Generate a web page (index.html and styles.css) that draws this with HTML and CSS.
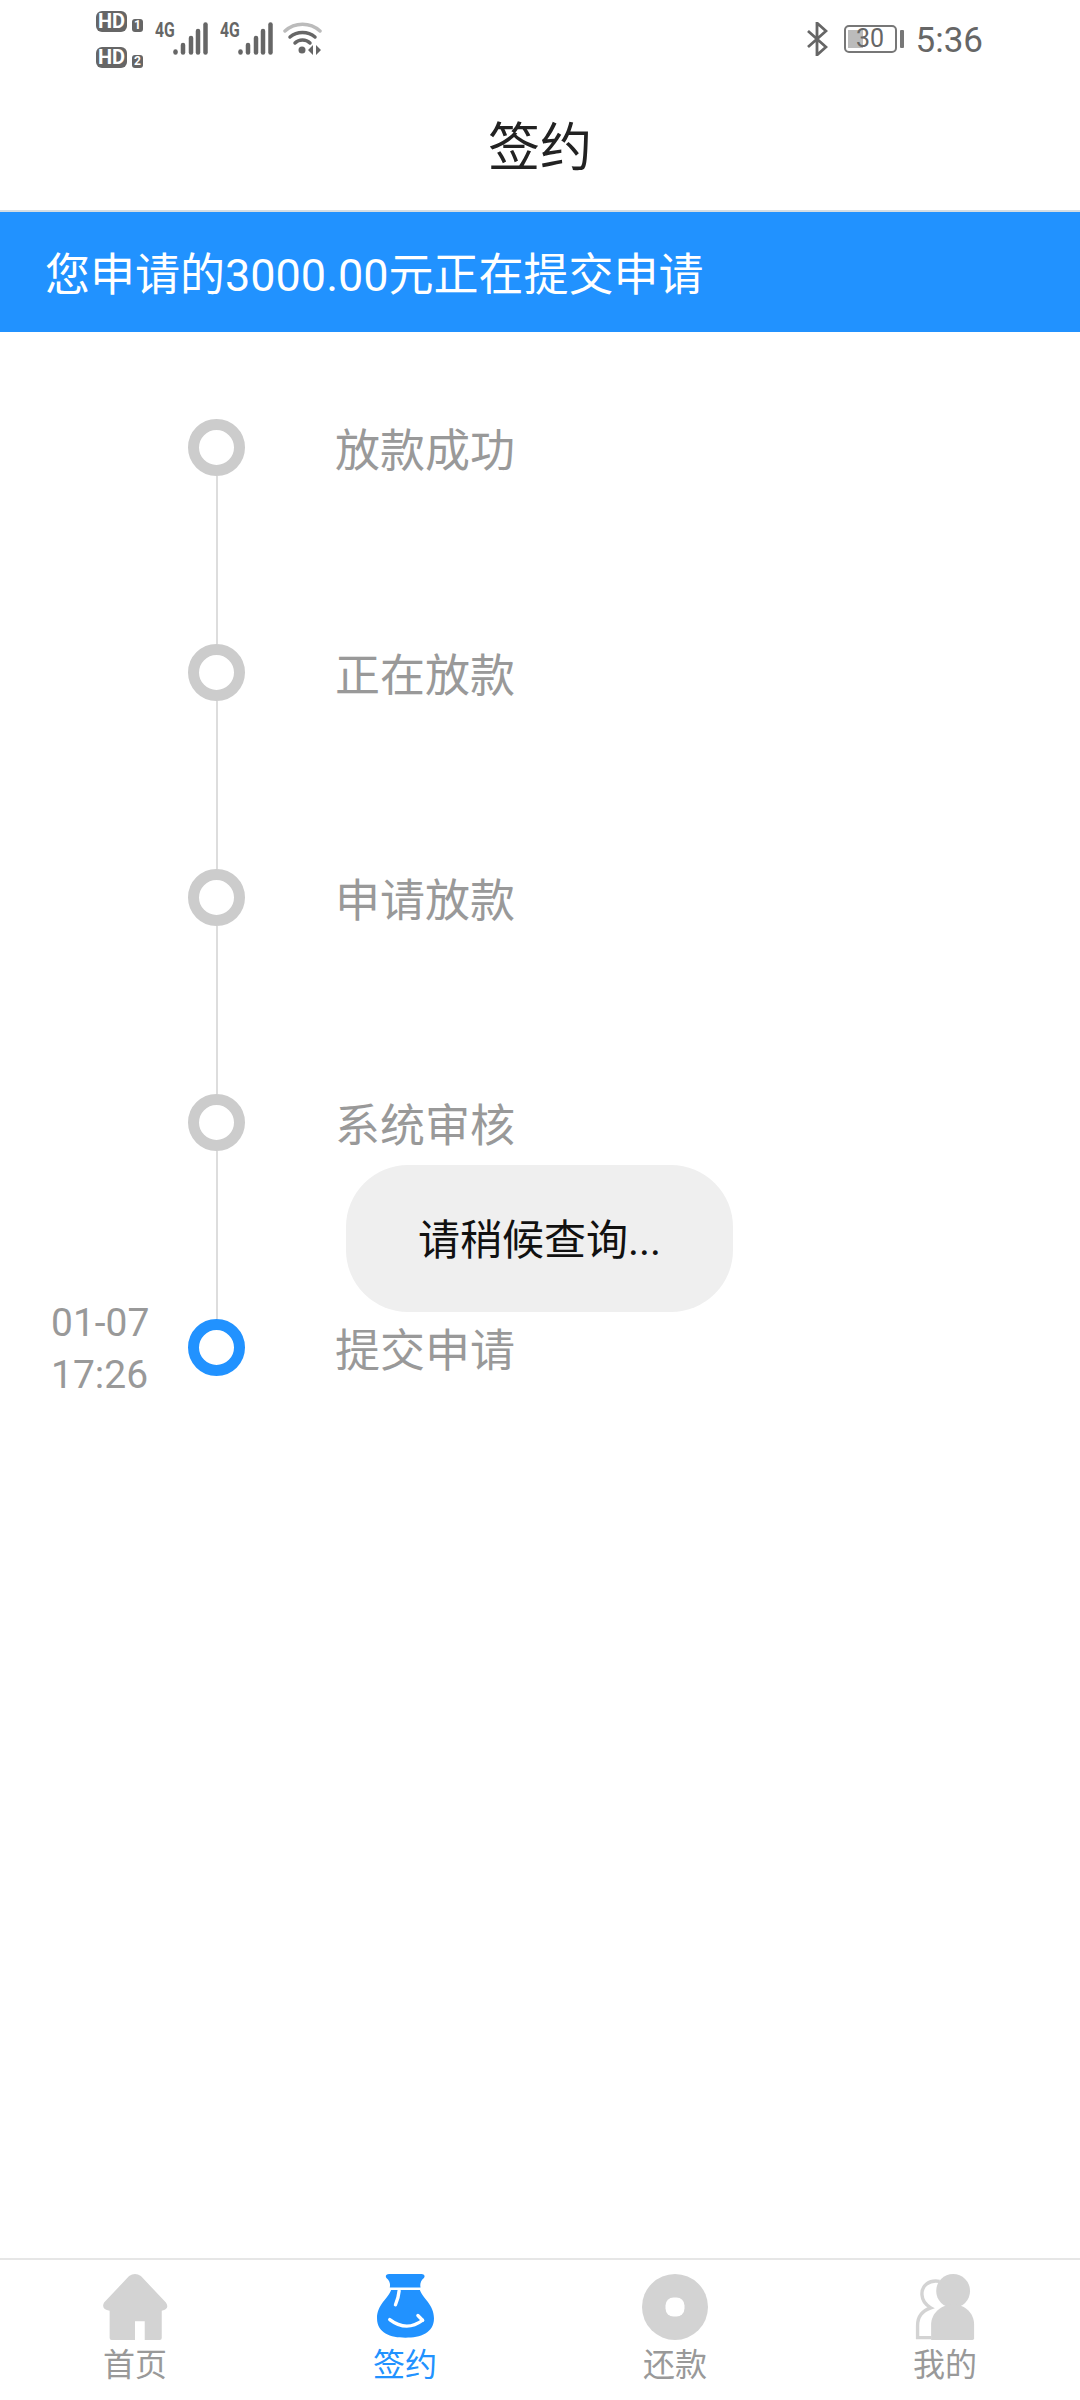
FILE: index.html
```html
<!DOCTYPE html>
<html lang="zh-CN">
<head>
    <meta charset="UTF-8">
    <meta name="viewport" content="width=device-width, initial-scale=1.0">
    <title>签约</title>
    <link rel="stylesheet" href="styles.css">
</head>
<body>
    <div class="status-bar">
        <div class="hd-col">
            <div class="hd-row"><span class="hd">HD</span><span class="sim">1</span></div>
            <div class="hd-row"><span class="hd">HD</span><span class="sim">2</span></div>
        </div>
        <div class="signal">
            <span class="net">4G</span>
            <svg class="bars" width="35" height="33" viewBox="0 0 35 33">
                <g stroke="#666" stroke-width="4.5" stroke-linecap="round">
                    <line x1="2.5" y1="30.5" x2="2.5" y2="29.5"/>
                    <line x1="10" y1="30.5" x2="10" y2="23"/>
                    <line x1="18" y1="30.5" x2="18" y2="16"/>
                    <line x1="25" y1="30.5" x2="25" y2="9"/>
                    <line x1="32.5" y1="30.5" x2="32.5" y2="2.5"/>
                </g>
            </svg>
        </div>
        <div class="signal">
            <span class="net">4G</span>
            <svg class="bars" width="35" height="33" viewBox="0 0 35 33">
                <g stroke="#666" stroke-width="4.5" stroke-linecap="round">
                    <line x1="2.5" y1="30.5" x2="2.5" y2="29.5"/>
                    <line x1="10" y1="30.5" x2="10" y2="23"/>
                    <line x1="18" y1="30.5" x2="18" y2="16"/>
                    <line x1="25" y1="30.5" x2="25" y2="9"/>
                    <line x1="32.5" y1="30.5" x2="32.5" y2="2.5"/>
                </g>
            </svg>
        </div>
        <svg class="wifi" width="40" height="33" viewBox="0 0 40 33">
            <g fill="none" stroke-linecap="round" stroke-width="3.5">
                <path d="M2 9 C12 0 27 0 37 9" stroke="#bbb"/>
                <path d="M7 15 C14 9 25 9 32 15" stroke="#666"/>
                <path d="M12 21 C16 17 23 17 27 21" stroke="#666"/>
            </g>
            <circle cx="19" cy="28" r="3.5" fill="#666"/>
            <path d="M25 28 L30 23 V33 Z M33 23 L38 28 L33 33 Z" fill="#666"/>
        </svg>
        <div class="status-right">
            <svg class="bt" width="21" height="34" viewBox="0 0 21 34">
                <path d="M1 9 L19 25 L10 33 V1 L19 9 L1 25" fill="none" stroke="#666" stroke-width="2.8"/>
            </svg>
            <div class="battery">
                <div class="battery-fill"></div>
                <span class="battery-num">30</span>
            </div>
            <div class="battery-nub"></div>
            <span class="clock">5:36</span>
        </div>
    </div>

    <h1 class="title">签约</h1>
    <div class="banner">您申请的3000.00元正在提交申请</div>

    <div class="timeline">
        <div class="step">
            <div class="step-time"></div>
            <div class="step-mark"><span class="dot"></span><span class="line"></span></div>
            <div class="step-name">放款成功</div>
        </div>
        <div class="step">
            <div class="step-time"></div>
            <div class="step-mark"><span class="dot"></span><span class="line"></span></div>
            <div class="step-name">正在放款</div>
        </div>
        <div class="step">
            <div class="step-time"></div>
            <div class="step-mark"><span class="dot"></span><span class="line"></span></div>
            <div class="step-name">申请放款</div>
        </div>
        <div class="step">
            <div class="step-time"></div>
            <div class="step-mark"><span class="dot"></span><span class="line"></span></div>
            <div class="step-name">系统审核</div>
        </div>
        <div class="step">
            <div class="step-time">01-07<br>17:26</div>
            <div class="step-mark"><span class="dot dot-active"></span></div>
            <div class="step-name">提交申请</div>
        </div>
    </div>

    <div class="toast">请稍候查询...</div>

    <nav class="tabbar">
        <div class="tab">
            <svg width="66" height="66" viewBox="0 0 190 190">
                <path d="M78 6 Q95 -6 112 6 L184 82 Q196 100 172 106 V184 Q172 190 166 190 H28 Q22 190 22 184 V106 Q-4 100 6 82 Z" fill="#d3d3d3"/>
                <rect x="95" y="136" width="28" height="54" fill="#fff"/>
            </svg>
            <span>首页</span>
        </div>
        <div class="tab tab-active">
            <svg width="57" height="66" viewBox="0 0 170 197">
                <path d="M36 0 Q82 -6 134 0 Q146 2 140 12 Q126 24 130 40 H38 Q42 24 28 12 Q22 2 36 0 Z" fill="#2192ff"/>
                <path d="M42 48 H128 C136 72 170 92 170 132 C170 176 130 190 85 190 C40 190 0 176 0 132 C0 92 34 72 42 48 Z" fill="#2192ff"/>
                <g fill="none" stroke="#fff" stroke-width="10" stroke-linecap="round">
                    <path d="M66 50 Q64 72 55 92"/>
                    <path d="M38 136 Q88 174 136 138"/>
                    <path d="M122 124 L136 138"/>
                </g>
            </svg>
            <span>签约</span>
        </div>
        <div class="tab">
            <svg width="66" height="66" viewBox="0 0 66 66">
                <circle cx="33" cy="33" r="33" fill="#d3d3d3"/>
                <rect x="23.5" y="23.5" width="19" height="19" rx="8" fill="#fff"/>
            </svg>
            <span>还款</span>
        </div>
        <div class="tab">
            <svg width="60" height="66" viewBox="0 0 172 195">
                <path d="M70 22 C40 16 16 34 18 62 C19 80 30 92 44 100 C20 108 5 126 5 152 V188 H46" fill="none" stroke="#d3d3d3" stroke-width="10"/>
                <circle cx="110" cy="50" r="50" fill="#d3d3d3"/>
                <path d="M45 195 V150 C45 115 75 90 110 90 C145 90 172 115 172 150 V190 Q172 195 167 195 Z" fill="#d3d3d3"/>
            </svg>
            <span>我的</span>
        </div>
    </nav>
</body>
</html>
```

FILE: styles.css
```css
* {
    box-sizing: border-box;
}
html, body {
    margin: 0;
    padding: 0;
}
body {
    position: relative;
    width: 1080px;
    height: 2400px;
    display: flex;
    flex-direction: column;
    background-color: #fff;
    font-family: Roboto, "Noto Sans CJK SC", sans-serif;
    color: #999;
}

/* status bar */
.status-bar {
    height: 84px;
    display: flex;
    align-items: flex-start;
    padding: 11px 97px 0 96px;
}
.hd-col {
    width: 59px;
    display: flex;
    flex-direction: column;
    gap: 15px;
}
.hd-row {
    display: flex;
    align-items: flex-end;
    gap: 5px;
    height: 21px;
}
.hd {
    width: 31px;
    height: 21px;
    background-color: #666;
    border-radius: 6px;
    color: #fff;
    font-size: 20px;
    font-weight: 700;
    line-height: 21px;
    text-align: center;
}
.sim {
    width: 11px;
    height: 13px;
    background-color: #666;
    border-radius: 3px;
    color: #fff;
    font-size: 12px;
    font-weight: 700;
    line-height: 13px;
    text-align: center;
}
.signal {
    display: flex;
    align-items: flex-start;
    width: 65px;
    margin-top: 11px;
}
.net {
    width: 18px;
    color: #666;
    font-size: 21px;
    font-weight: 700;
    line-height: 17px;
    transform: scaleX(0.75);
    transform-origin: left center;
}
.wifi {
    margin-top: 11px;
    margin-left: -2px;
}
.status-right {
    margin-left: auto;
    display: flex;
    align-items: center;
    height: 34px;
    margin-top: 11px;
    color: #666;
}
.battery {
    position: relative;
    width: 53px;
    height: 28px;
    margin-left: 16px;
    border: 2px solid #777;
    border-radius: 5px;
    display: flex;
    align-items: center;
    justify-content: center;
}
.battery-fill {
    position: absolute;
    left: 2px;
    top: 3px;
    bottom: 3px;
    width: 15px;
    background-color: #bbb;
}
.battery-num {
    position: relative;
    font-size: 25px;
    line-height: 24px;
}
.battery-nub {
    width: 4px;
    height: 18px;
    margin-left: 3px;
    background-color: #777;
    border-radius: 1px;
}
.clock {
    margin-left: 12px;
    font-size: 35px;
    line-height: 36px;
    padding-top: 3px;
}

/* title + banner */
.title {
    height: 128px;
    margin: 0;
    border-bottom: 2px solid #d5dde3;
    color: #222;
    font-size: 52px;
    font-weight: 400;
    line-height: 130px;
    text-align: center;
}
.banner {
    height: 120px;
    padding-left: 45px;
    background-color: #2192ff;
    color: #fff;
    font-size: 45px;
    line-height: 127px;
}

/* timeline */
.timeline {
    flex: 1;
    padding: 87px 0 0 51px;
}
.step {
    display: flex;
    height: 225px;
}
.step-time {
    width: 137px;
    margin-top: -22px;
    font-size: 39px;
    line-height: 52px;
}
.step-mark {
    width: 57px;
    display: flex;
    flex-direction: column;
    align-items: center;
}
.dot {
    width: 57px;
    height: 57px;
    flex: none;
    border: 11px solid #ccc;
    border-radius: 50%;
}
.dot-active {
    border-color: #2192ff;
}
.line {
    flex: 1;
    width: 2px;
    background-color: #ddd;
}
.step-name {
    margin-left: 90px;
    margin-top: 1px;
    font-size: 45px;
    line-height: 64px;
}

/* toast */
.toast {
    position: absolute;
    left: 346px;
    top: 1165px;
    width: 387px;
    height: 147px;
    background-color: #efefef;
    border-radius: 62px;
    color: #111;
    font-size: 42px;
    line-height: 152px;
    text-align: center;
}

/* bottom tabs */
.tabbar {
    height: 142px;
    border-top: 2px solid #e6e6e6;
    padding-top: 14px;
    display: grid;
    grid-template-columns: repeat(4, 270px);
}
.tab {
    display: flex;
    flex-direction: column;
    align-items: center;
    font-size: 32px;
    line-height: 44px;
    gap: 3px;
}
.tab svg {
    display: block;
}
.tab-active {
    color: #2192ff;
}
```
